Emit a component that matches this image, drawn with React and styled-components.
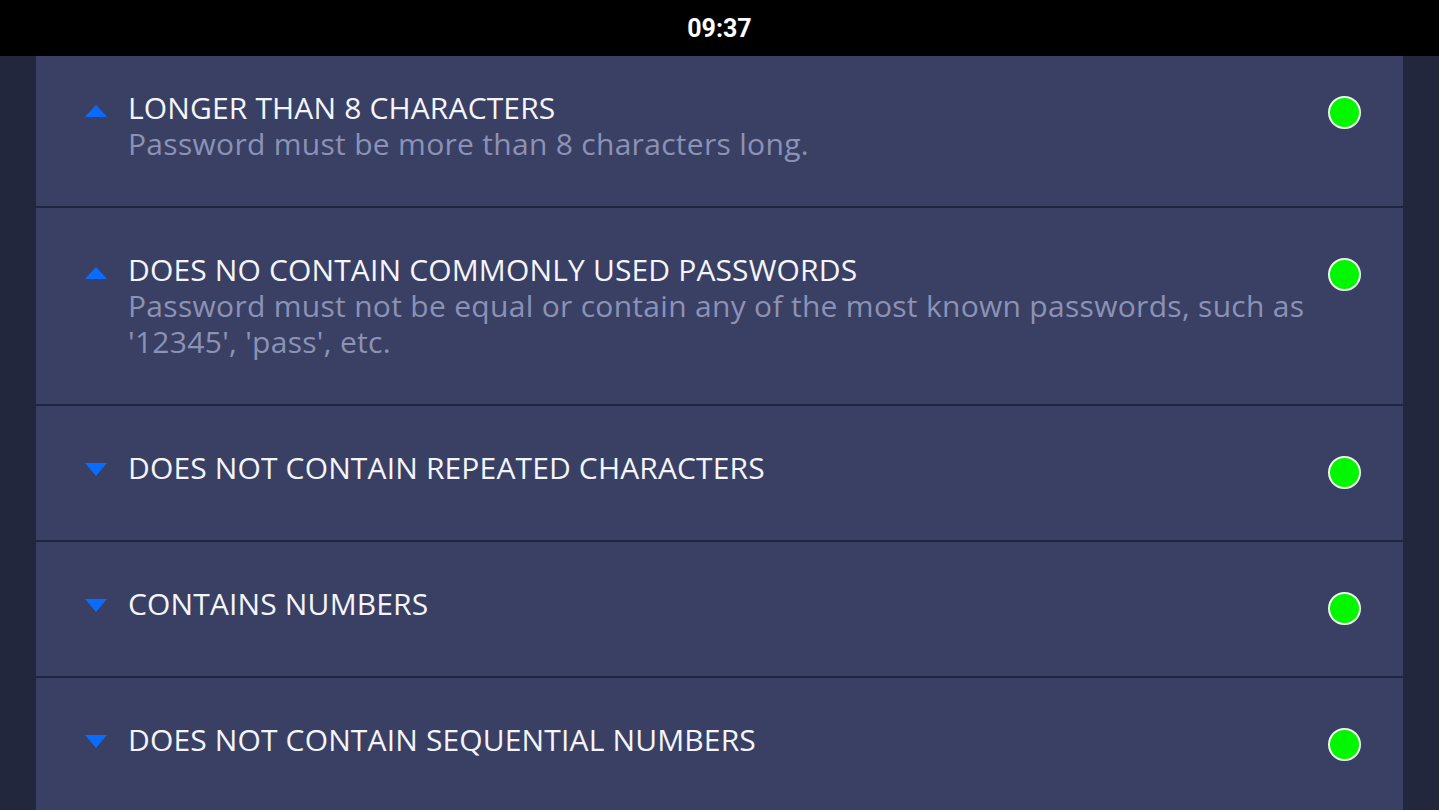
import React from 'react';
import styled, { createGlobalStyle } from 'styled-components';

const Global = createGlobalStyle`
    html, body {
        margin: 0;
        padding: 0;
        background: #22273d;
        overflow: hidden;
    }
    * { box-sizing: border-box; }
`;

const Screen = styled.div`
    width: 1439px;
    height: 810px;
    display: flex;
    flex-direction: column;
    background: #22273d;
    overflow: hidden;
`;

const StatusBar = styled.div`
    height: 56px;
    flex: none;
    background: #000;
    display: flex;
    align-items: center;
    justify-content: center;
    color: #fff;
    font-family: Roboto, "Liberation Sans", sans-serif;
    font-weight: 700;
    font-size: 25px;
    position: relative;
    z-index: 2;
`;

const Viewport = styled.div`
    flex: 1;
    overflow: hidden;
    padding: 0 36px;
`;

const List = styled.div`
    margin-top: -10px;
    background: #394064;
    display: flex;
    flex-direction: column;
`;

const Row = styled.div`
    display: flex;
    align-items: flex-start;
    min-height: 136px;
    padding: 44px 42px 44px 49px;
    border-bottom: 2px solid #1f2540;
`;

const Arrow = styled.div`
    width: 0;
    height: 0;
    flex: none;
    margin-top: ${p => (p.open ? '15px' : '13px')};
    margin-right: 21px;
    border-left: 11px solid transparent;
    border-right: 11px solid transparent;
    ${p => p.open
        ? 'border-bottom: 12px solid #0a6cff;'
        : 'border-top: 13px solid #0a6cff;'}
`;

const Body = styled.div`
    flex: 1;
    font-family: "Open Sans", "Noto Sans", sans-serif;
`;

const Title = styled.div`
    color: #f4f5fa;
    font-size: 30px;
    line-height: 36px;
    letter-spacing: 0.15px;
`;

const Desc = styled.div`
    color: #8c92b6;
    font-size: 30px;
    line-height: 36px;
    letter-spacing: 0.3px;
`;

const Dot = styled.div`
    width: 33px;
    height: 33px;
    flex: none;
    margin: 6px 0 0 4px;
    border-radius: 50%;
    background: #00f700;
    border: 2px solid #f2f6ee;
`;

const rules = [
    { title: 'LONGER THAN 8 CHARACTERS', desc: 'Password must be more than 8 characters long.', open: true },
    { title: 'DOES NO CONTAIN COMMONLY USED PASSWORDS', desc: "Password must not be equal or contain any of the most known passwords, such as '12345', 'pass', etc.", open: true },
    { title: 'DOES NOT CONTAIN REPEATED CHARACTERS' },
    { title: 'CONTAINS NUMBERS' },
    { title: 'DOES NOT CONTAIN SEQUENTIAL NUMBERS' },
];

const App = () => {
    return (
        <Screen>
            <Global />
            <StatusBar>09:37</StatusBar>
            <Viewport>
                <List>
                    {rules.map(r => (
                        <Row key={r.title}>
                            <Arrow open={r.open} />
                            <Body>
                                <Title>{r.title}</Title>
                                {r.open && <Desc>{r.desc}</Desc>}
                            </Body>
                            <Dot />
                        </Row>
                    ))}
                </List>
            </Viewport>
        </Screen>
    );
};

export default App;
